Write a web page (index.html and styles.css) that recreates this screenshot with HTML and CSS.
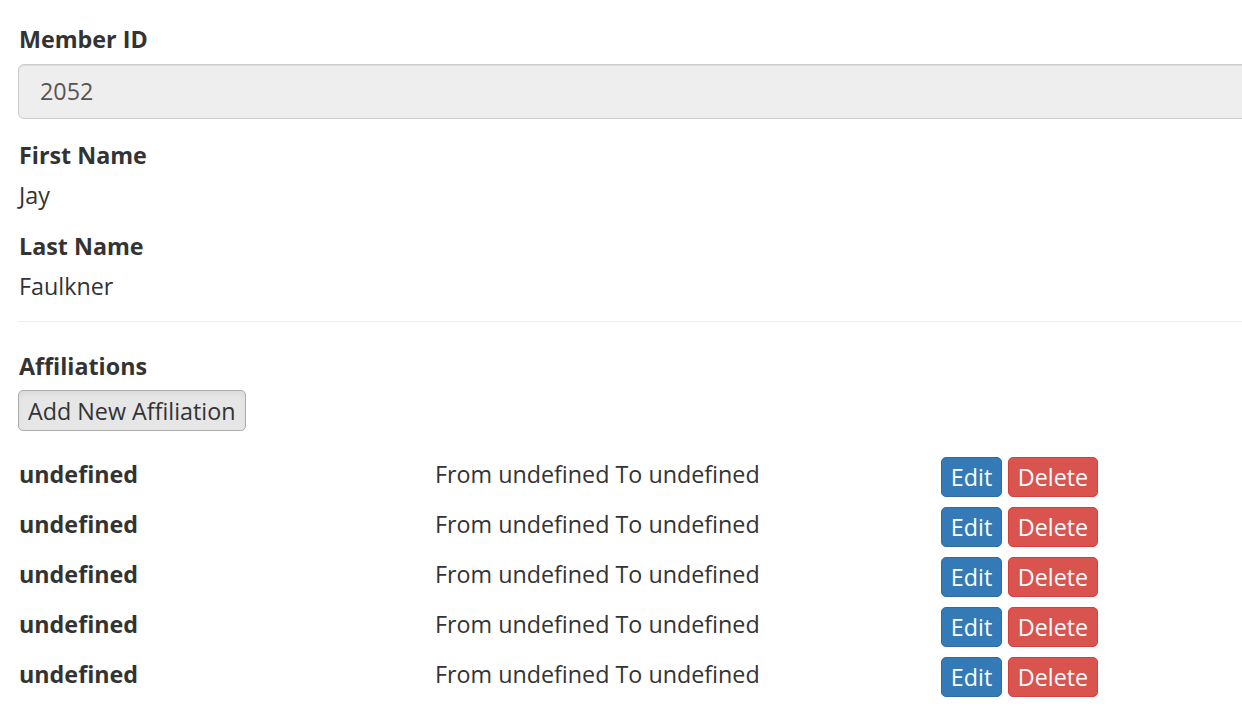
FILE: index.html
```html
<!DOCTYPE html>
<html>
<head>
<meta charset="utf-8">
<link rel="stylesheet" href="styles.css">
</head>
<body>
<div class="page">
  <div class="field">
    <label class="label">Member ID</label>
    <div class="input">2052</div>
  </div>
  <div class="field">
    <label class="label">First Name</label>
    <div class="value">Jay</div>
  </div>
  <div class="field">
    <label class="label">Last Name</label>
    <div class="value">Faulkner</div>
  </div>
  <hr class="rule">
  <div class="section">
    <label class="label">Affiliations</label>
    <button class="btn btn-default">Add New Affiliation</button>
  </div>
  <div class="rows">
    <div class="row">
      <div class="name">undefined</div>
      <div class="dates">From undefined To undefined</div>
      <div class="actions"><button class="btn btn-primary">Edit</button><button class="btn btn-danger">Delete</button></div>
    </div>
    <div class="row">
      <div class="name">undefined</div>
      <div class="dates">From undefined To undefined</div>
      <div class="actions"><button class="btn btn-primary">Edit</button><button class="btn btn-danger">Delete</button></div>
    </div>
    <div class="row">
      <div class="name">undefined</div>
      <div class="dates">From undefined To undefined</div>
      <div class="actions"><button class="btn btn-primary">Edit</button><button class="btn btn-danger">Delete</button></div>
    </div>
    <div class="row">
      <div class="name">undefined</div>
      <div class="dates">From undefined To undefined</div>
      <div class="actions"><button class="btn btn-primary">Edit</button><button class="btn btn-danger">Delete</button></div>
    </div>
    <div class="row">
      <div class="name">undefined</div>
      <div class="dates">From undefined To undefined</div>
      <div class="actions"><button class="btn btn-primary">Edit</button><button class="btn btn-danger">Delete</button></div>
    </div>
  </div>
</div>
</body>
</html>
```
FILE: styles.css
```css
html, body {
  margin: 0;
  padding: 0;
  background: #fff;
  overflow: hidden;
}
body {
  font-family: "Open Sans", "Liberation Sans", sans-serif;
  font-size: 23.3px;
  line-height: 30px;
  color: #333;
}
.page {
  width: 1280px;
  padding: 24px 0 0 18px;
}
.label {
  display: block;
  font-weight: 700;
  margin-bottom: 10px;
  padding-left: 1px;
}
.field {
  margin-bottom: 21px;
}
.input {
  height: 55px;
  box-sizing: border-box;
  border: 1px solid #ccc;
  border-radius: 6px;
  background: #eee;
  box-shadow: inset 0 1px 1px rgba(0,0,0,.075);
  color: #555;
  padding: 11px 21px;
  line-height: 31px;
}
.value {
  padding-left: 1px;
  margin-top: 1px;
}
.rule {
  border: 0;
  border-top: 1px solid #eee;
  margin: -1px 0 29px 0;
}
.section .label {
  margin-bottom: 9px;
}
.btn {
  font-family: inherit;
  font-size: 23.3px;
  line-height: 28px;
  border-radius: 5px;
  border: 1px solid transparent;
  padding: 5px 9px;
  margin: 0;
  cursor: pointer;
}
.btn-default {
  background: #e6e6e6;
  border-color: #adadad;
  color: #333;
  height: 41px;
  box-shadow: inset 0 3px 5px rgba(0,0,0,.05);
}
.rows {
  margin-top: 26px;
}
.row {
  display: grid;
  grid-template-columns: 417px 506px auto;
  align-items: center;
  height: 40px;
  margin-bottom: 10px;
}
.name {
  font-weight: 700;
  padding-left: 1px;
  margin-top: -6px;
}
.dates {
  margin-top: -6px;
}
.actions {
  display: flex;
  gap: 6px;
}
.btn-primary {
  background: #337ab7;
  border-color: #2e6da4;
  color: #fff;
  height: 40px;
  width: 61px;
  padding: 5px 0;
}
.btn-danger {
  background: #d9534f;
  border-color: #d43f3a;
  color: #fff;
  height: 40px;
  width: 90px;
  padding: 5px 0;
}
```
